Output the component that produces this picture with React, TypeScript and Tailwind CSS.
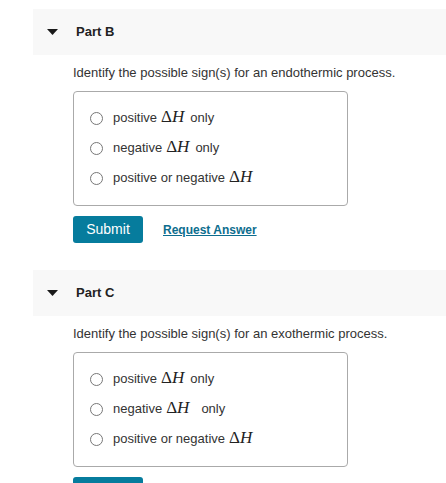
import React from 'react';

const options = [
  { pre: 'positive', post: 'only' },
  { pre: 'negative', post: 'only' },
  { pre: 'positive or negative', post: '' },
];

function DeltaH() {
  return (
    <span className="text-[17px] leading-none text-[#222]" style={{ fontFamily: '"Liberation Serif", serif' }}>
      Δ<i>H</i>
    </span>
  );
}

function Part({ label, question, wideGap }: { label: string; question: string; wideGap?: boolean }) {
  return (
    <section>
      <div className="ml-[33px] flex h-[46px] items-center bg-[#f8f8f8]">
        <svg width="11" height="6" viewBox="0 0 11 6" className="ml-[14px]">
          <path d="M0 0 L11 0 L5.5 6 Z" fill="#1a1a1a" />
        </svg>
        <span className="ml-[18px] text-[13px] font-bold text-[#222]">{label}</span>
      </div>
      <div className="pl-[73px]">
        <p className="mt-[10px] text-[13px] leading-[16px] text-[#333]">{question}</p>
        <div className="mt-[10px] w-[275px] rounded-[4px] border border-[#aaa] pb-[12px] pt-[11px]">
          {options.map((o, i) => (
            <label key={i} className="flex h-[30px] items-center pl-[16px] text-[13px] text-[#333]">
              <span className="h-[13px] w-[13px] rounded-full border border-[#777] bg-white" />
              <span className="ml-[10px] flex items-baseline">
                <span className="mr-[4px]">{o.pre}</span>
                <DeltaH />
                {o.post && (
                  <span className={i === 1 && wideGap ? 'ml-[12px]' : 'ml-[6px]'}>{o.post}</span>
                )}
              </span>
            </label>
          ))}
        </div>
        <div className="mt-[10px] flex items-center">
          <button className="h-[27px] w-[70px] rounded-[3px] bg-[#067c9d] text-[14px] text-white">
            Submit
          </button>
          <a className="ml-[20px] text-[12px] font-bold text-[#0d6d8e] underline">Request Answer</a>
        </div>
      </div>
    </section>
  );
}

export default function App() {
  return (
    <div className="w-[446px] bg-white pt-[9px]" style={{ fontFamily: '"Liberation Sans", Arial, sans-serif' }}>
      <Part label="Part B" question="Identify the possible sign(s) for an endothermic process." />
      <div className="h-[27px]" />
      <Part label="Part C" question="Identify the possible sign(s) for an exothermic process." wideGap />
    </div>
  );
}
